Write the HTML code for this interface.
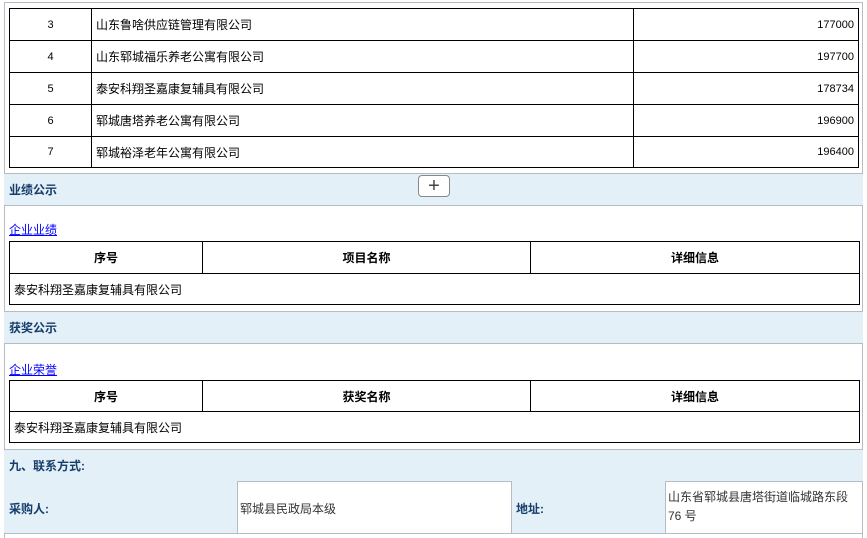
<!DOCTYPE html><html><head><meta charset="utf-8"><style>
body{margin:0;width:867px;height:538px;background:#fff;position:relative;overflow:hidden;font-family:"Liberation Sans","Noto Sans CJK SC",sans-serif;font-size:12px;color:#000}
.a{position:absolute;box-sizing:border-box}
.c{position:absolute;box-sizing:border-box;border:1px solid #000;display:flex;align-items:center}
.bar{position:absolute;left:4px;width:859px;background:#e3f0f7;border-top:1px solid #b5bcc3;border-bottom:1px solid #b5bcc3;font-weight:bold;color:#163d6b;display:flex;align-items:center;padding-left:5px;box-sizing:border-box}
.lk{position:absolute;left:9px;color:#00f;text-decoration:underline}
</style></head><body>
<div class="a" style="left:4px;top:2px;width:859px;height:536px;border:1px solid #b5bcc3;border-bottom:none"></div>
<div class="c" style="left:9px;top:8px;width:83px;height:33px;justify-content:center;font-size:11px">3</div>
<div class="c" style="left:91px;top:8px;width:543px;height:33px;padding-left:4px">山东鲁啥供应链管理有限公司</div>
<div class="c" style="left:633px;top:8px;width:226px;height:33px;justify-content:flex-end;padding-right:4px;font-size:11px">177000</div>
<div class="c" style="left:9px;top:40px;width:83px;height:33px;justify-content:center;font-size:11px">4</div>
<div class="c" style="left:91px;top:40px;width:543px;height:33px;padding-left:4px">山东郓城福乐养老公寓有限公司</div>
<div class="c" style="left:633px;top:40px;width:226px;height:33px;justify-content:flex-end;padding-right:4px;font-size:11px">197700</div>
<div class="c" style="left:9px;top:72px;width:83px;height:33px;justify-content:center;font-size:11px">5</div>
<div class="c" style="left:91px;top:72px;width:543px;height:33px;padding-left:4px">泰安科翔圣嘉康复辅具有限公司</div>
<div class="c" style="left:633px;top:72px;width:226px;height:33px;justify-content:flex-end;padding-right:4px;font-size:11px">178734</div>
<div class="c" style="left:9px;top:104px;width:83px;height:33px;justify-content:center;font-size:11px">6</div>
<div class="c" style="left:91px;top:104px;width:543px;height:33px;padding-left:4px">郓城唐塔养老公寓有限公司</div>
<div class="c" style="left:633px;top:104px;width:226px;height:33px;justify-content:flex-end;padding-right:4px;font-size:11px">196900</div>
<div class="c" style="left:9px;top:136px;width:83px;height:32px;justify-content:center;font-size:11px">7</div>
<div class="c" style="left:91px;top:136px;width:543px;height:32px;padding-left:4px">郓城裕泽老年公寓有限公司</div>
<div class="c" style="left:633px;top:136px;width:226px;height:32px;justify-content:flex-end;padding-right:4px;font-size:11px">196400</div>

<div class="bar" style="top:173px;height:33px">业绩公示</div>
<div class="a" style="left:418px;top:175px;width:32px;height:22px;border:1px solid #888;border-radius:4px;background:#fff;text-align:center;line-height:20px;font-size:20px;font-weight:300;color:#444">+</div>
<div class="lk" style="top:221px">企业业绩</div>
<div class="c" style="left:9px;top:241px;width:194px;height:33px;justify-content:center;font-weight:bold">序号</div>
<div class="c" style="left:202px;top:241px;width:329px;height:33px;justify-content:center;font-weight:bold">项目名称</div>
<div class="c" style="left:530px;top:241px;width:330px;height:33px;justify-content:center;font-weight:bold">详细信息</div>
<div class="c" style="left:9px;top:273px;width:851px;height:32px;padding-left:4px">泰安科翔圣嘉康复辅具有限公司</div>

<div class="bar" style="top:311px;height:33px">获奖公示</div>
<div class="lk" style="top:361px">企业荣誉</div>
<div class="c" style="left:9px;top:380px;width:194px;height:32px;justify-content:center;font-weight:bold">序号</div>
<div class="c" style="left:202px;top:380px;width:329px;height:32px;justify-content:center;font-weight:bold">获奖名称</div>
<div class="c" style="left:530px;top:380px;width:330px;height:32px;justify-content:center;font-weight:bold">详细信息</div>
<div class="c" style="left:9px;top:411px;width:851px;height:32px;padding-left:4px">泰安科翔圣嘉康复辅具有限公司</div>

<div class="bar" style="top:449px;height:33px">九、联系方式:</div>
<div class="a" style="left:4px;top:481px;width:234px;height:53px;background:#e3f0f7;border-right:1px solid #b5bcc3;border-bottom:1px solid #b5bcc3;font-weight:bold;color:#163d6b;padding:19px 0 0 5px">采购人:</div>
<div class="a" style="left:237px;top:481px;width:275px;height:53px;border-bottom:1px solid #b5bcc3;padding:19px 0 0 3px;color:#333">郓城县民政局本级</div>
<div class="a" style="left:511px;top:481px;width:155px;height:53px;background:#e3f0f7;border-left:1px solid #b5bcc3;border-right:1px solid #b5bcc3;border-bottom:1px solid #b5bcc3;font-weight:bold;color:#163d6b;padding:19px 0 0 4px">地址:</div>
<div class="a" style="left:665px;top:481px;width:198px;height:53px;border-bottom:1px solid #b5bcc3;padding:7px 0 0 3px;color:#333;line-height:19px;white-space:nowrap">山东省郓城县唐塔街道临城路东段<br>76 号</div>
</body></html>
